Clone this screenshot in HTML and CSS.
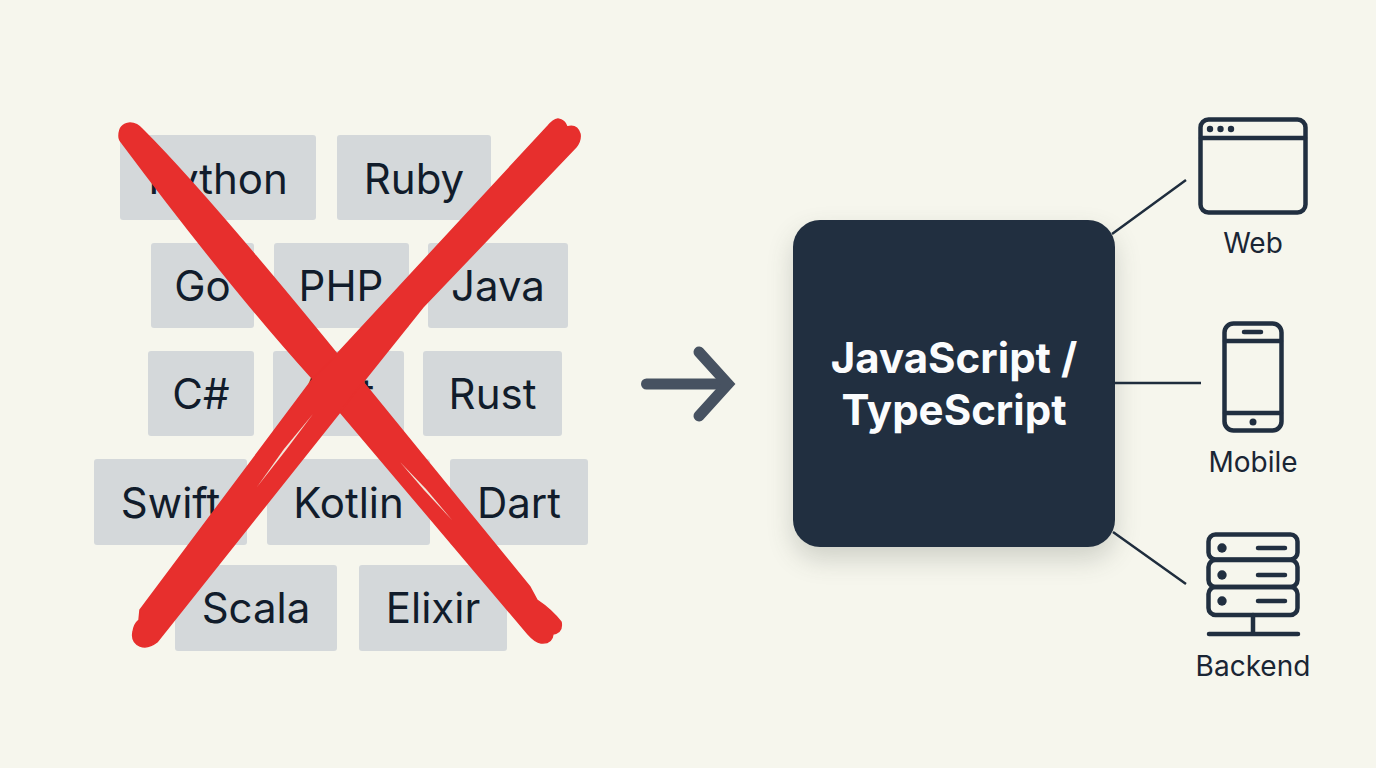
FILE: index.html
```html
<!DOCTYPE html>
<html lang="en">
<head>
<meta charset="utf-8">
<title>Many languages to JavaScript / TypeScript</title>
<link rel="stylesheet" href="styles.css">
</head>
<body>
<main class="stage">
  <section class="languages">
    <div class="row row-1">
      <div class="tile w-python">Python</div>
      <div class="tile w-ruby">Ruby</div>
    </div>
    <div class="row row-2">
      <div class="tile w-go">Go</div>
      <div class="tile w-php">PHP</div>
      <div class="tile w-java">Java</div>
    </div>
    <div class="row row-3">
      <div class="tile w-cs">C#</div>
      <div class="tile w-ant">Ant</div>
      <div class="tile w-rust">Rust</div>
    </div>
    <div class="row row-4">
      <div class="tile w-swift">Swift</div>
      <div class="tile w-kotlin">Kotlin</div>
      <div class="tile w-dart">Dart</div>
    </div>
    <div class="row row-5">
      <div class="tile w-scala">Scala</div>
      <div class="tile w-elixir">Elixir</div>
    </div>
  </section>

  <svg class="cross" viewBox="0 0 1376 768" aria-hidden="true">
    <path class="stroke" d="M119 136 Q119 124 130 123 Q137 123 143 130 Q205 192 337 354 L363 382 L530 587 L537 600 Q552 610 561 622 Q563 632 553 634 Q552 644 541 643 Q535 642 528 634 L340 412 L312 378 Q232 290 122 143 Q119 140 119 136 Z"/>
    <path class="stroke" d="M558 119 Q565 120 567 127 Q577 124 580 134 Q581 141 576 147 L423 307 L363 382 L340 412 L157 642 Q148 649 140 646 Q131 642 133 632 Q134 624 139 620 L140 610 L312 380 L337 354 L548 126 Q553 120 558 119 Z"/>
    <path class="slit" d="M313 414 L284 449 L257 487 L286 450 Z"/>
    <path class="slit" d="M400 462 L424 490 L452 520 L426 489 Z"/>
  </svg>

  <svg class="arrow" viewBox="0 0 104 78" aria-hidden="true">
    <path d="M10.500 39 H90"/>
    <path d="M63 7 L92 39 L63 71"/>
  </svg>

  <div class="hub">JavaScript /<br>TypeScript</div>

  <svg class="links" viewBox="0 0 120 420" aria-hidden="true">
    <path d="M2 64 L76 10 M2 213 H91 M3 362 L76 414"/>
  </svg>

  <section class="targets">
    <div class="target target-web">
      <svg class="icon icon-web" viewBox="0 0 110 98" aria-hidden="true">
        <rect x="2.500" y="2.500" width="105" height="93" rx="8"/>
        <path d="M3 21 H107"/>
        <circle class="dot" cx="12" cy="12" r="3.200"/>
        <circle class="dot" cx="22.500" cy="12" r="3.200"/>
        <circle class="dot" cx="33" cy="12" r="3.200"/>
      </svg>
      <span class="label">Web</span>
    </div>
    <div class="target target-mobile">
      <svg class="icon icon-mobile" viewBox="0 0 62 112" aria-hidden="true">
        <rect x="2.500" y="2.500" width="57" height="107" rx="9"/>
        <path d="M3 20 H59 M3 92 H59"/>
        <path d="M22 11 H39"/>
        <circle class="dot" cx="31" cy="101" r="3.500"/>
      </svg>
      <span class="label">Mobile</span>
    </div>
    <div class="target target-backend">
      <svg class="icon icon-backend" viewBox="0 0 94 104" aria-hidden="true">
        <rect x="2.500" y="2.500" width="89" height="25" rx="7"/>
        <rect x="2.500" y="28" width="89" height="27" rx="7"/>
        <rect x="2.500" y="55" width="89" height="28" rx="7"/>
        <circle class="dot" cx="16" cy="16" r="4.700"/>
        <circle class="dot" cx="16" cy="43" r="4.700"/>
        <circle class="dot" cx="16" cy="69" r="4.700"/>
        <path d="M52 16 H79 M52 43 H79 M52 69 H79"/>
        <path d="M47 83 V101 M3 102 H92"/>
      </svg>
      <span class="label">Backend</span>
    </div>
  </section>
</main>
</body>
</html>
```

FILE: styles.css
```css
* { box-sizing: border-box; }

html, body {
  margin: 0;
  height: 100%;
}

body {
  background: #f6f6ed;
  color: #111c2b;
  font-family: Inter, "Liberation Sans", sans-serif;
  overflow: hidden;
}

.stage {
  position: relative;
  width: 1376px;
  height: 768px;
  overflow: hidden;
}

/* Language tiles */
.languages {
  position: absolute;
  left: 94px;
  top: 135px;
  width: 494px;
  display: flex;
  flex-direction: column;
  gap: 23px;
}

.row {
  display: flex;
  gap: 20px;
}

.row-1 { margin-left: 26px; gap: 21px; }
.row-2 { margin-left: 57px; gap: 19.5px; }
.row-3 { margin-left: 54px; gap: 19px; }
.row-4 { margin-left: 0; }
.row-5 { margin-left: 81px; margin-top: -3px; gap: 22px; }

.tile {
  height: 85px;
  display: flex;
  align-items: center;
  justify-content: center;
  background: #d4d8da;
  border-radius: 3px;
  font-size: 42px;
  line-height: 1;
  color: #111c2b;
}

.row-1 .tile { padding-top: 2px; }
.row-4 .tile, .row-5 .tile { height: 86px; }
.row-4 .tile { padding-top: 2px; }

.w-python { width: 196px; }
.w-ruby { width: 154px; }
.w-go { width: 103px; }
.w-php { width: 135px; }
.w-java { width: 140px; }
.w-cs { width: 106px; }
.w-ant { width: 131px; letter-spacing: 4px; }
.w-rust { width: 139px; }
.w-swift { width: 153px; }
.w-kotlin { width: 163px; }
.w-dart { width: 138px; }
.w-scala { width: 162px; }
.w-elixir { width: 148px; }

/* Red cross over the tiles */
.cross {
  position: absolute;
  left: 0;
  top: 0;
  width: 1376px;
  height: 768px;
}

.stroke {
  fill: #e72f2d;
  stroke: #e72f2d;
  stroke-width: 1.500;
  stroke-linejoin: round;
}

.slit {
  fill: #f2e6da;
}

/* Arrow */
.arrow {
  position: absolute;
  left: 636px;
  top: 345px;
  width: 104px;
  height: 78px;
  overflow: visible;
}

.arrow path {
  fill: none;
  stroke: #475261;
  stroke-width: 11;
  stroke-linecap: round;
  stroke-linejoin: miter;
}

/* Central block */
.hub {
  position: absolute;
  left: 793px;
  top: 220px;
  width: 322px;
  height: 327px;
  display: flex;
  align-items: center;
  justify-content: center;
  text-align: center;
  background: #212f40;
  border-radius: 27px;
  box-shadow: 0 12px 26px rgba(70, 76, 70, 0.22);
  color: #fbfcfd;
  font-size: 42px;
  font-weight: 700;
  line-height: 52px;
}

.links {
  position: absolute;
  left: 1110px;
  top: 170px;
  width: 120px;
  height: 420px;
  overflow: visible;
}

.links path {
  fill: none;
  stroke: #1f2d3d;
  stroke-width: 2.500;
}

/* Targets */
.targets {
  position: absolute;
  left: 1180px;
  top: 0;
  width: 146px;
}

.target {
  position: absolute;
  left: 0;
  width: 146px;
  display: flex;
  flex-direction: column;
  align-items: center;
}

.target-web { top: 117px; }
.target-mobile { top: 321px; }
.target-backend { top: 532px; }

.icon {
  display: block;
  overflow: visible;
  fill: none;
  stroke: #212f40;
  stroke-width: 4.500;
  stroke-linecap: round;
}

.icon .dot {
  fill: #212f40;
  stroke: none;
}

.icon-web { width: 110px; height: 98px; }
.icon-mobile { width: 62px; height: 112px; }
.icon-backend { width: 94px; height: 104px; }

.label {
  font-size: 28px;
  line-height: 32px;
  color: #1a2534;
}

.target-web .label { margin-top: 12px; }
.target-mobile .label { margin-top: 13px; }
.target-backend .label { margin-top: 14px; }
```
